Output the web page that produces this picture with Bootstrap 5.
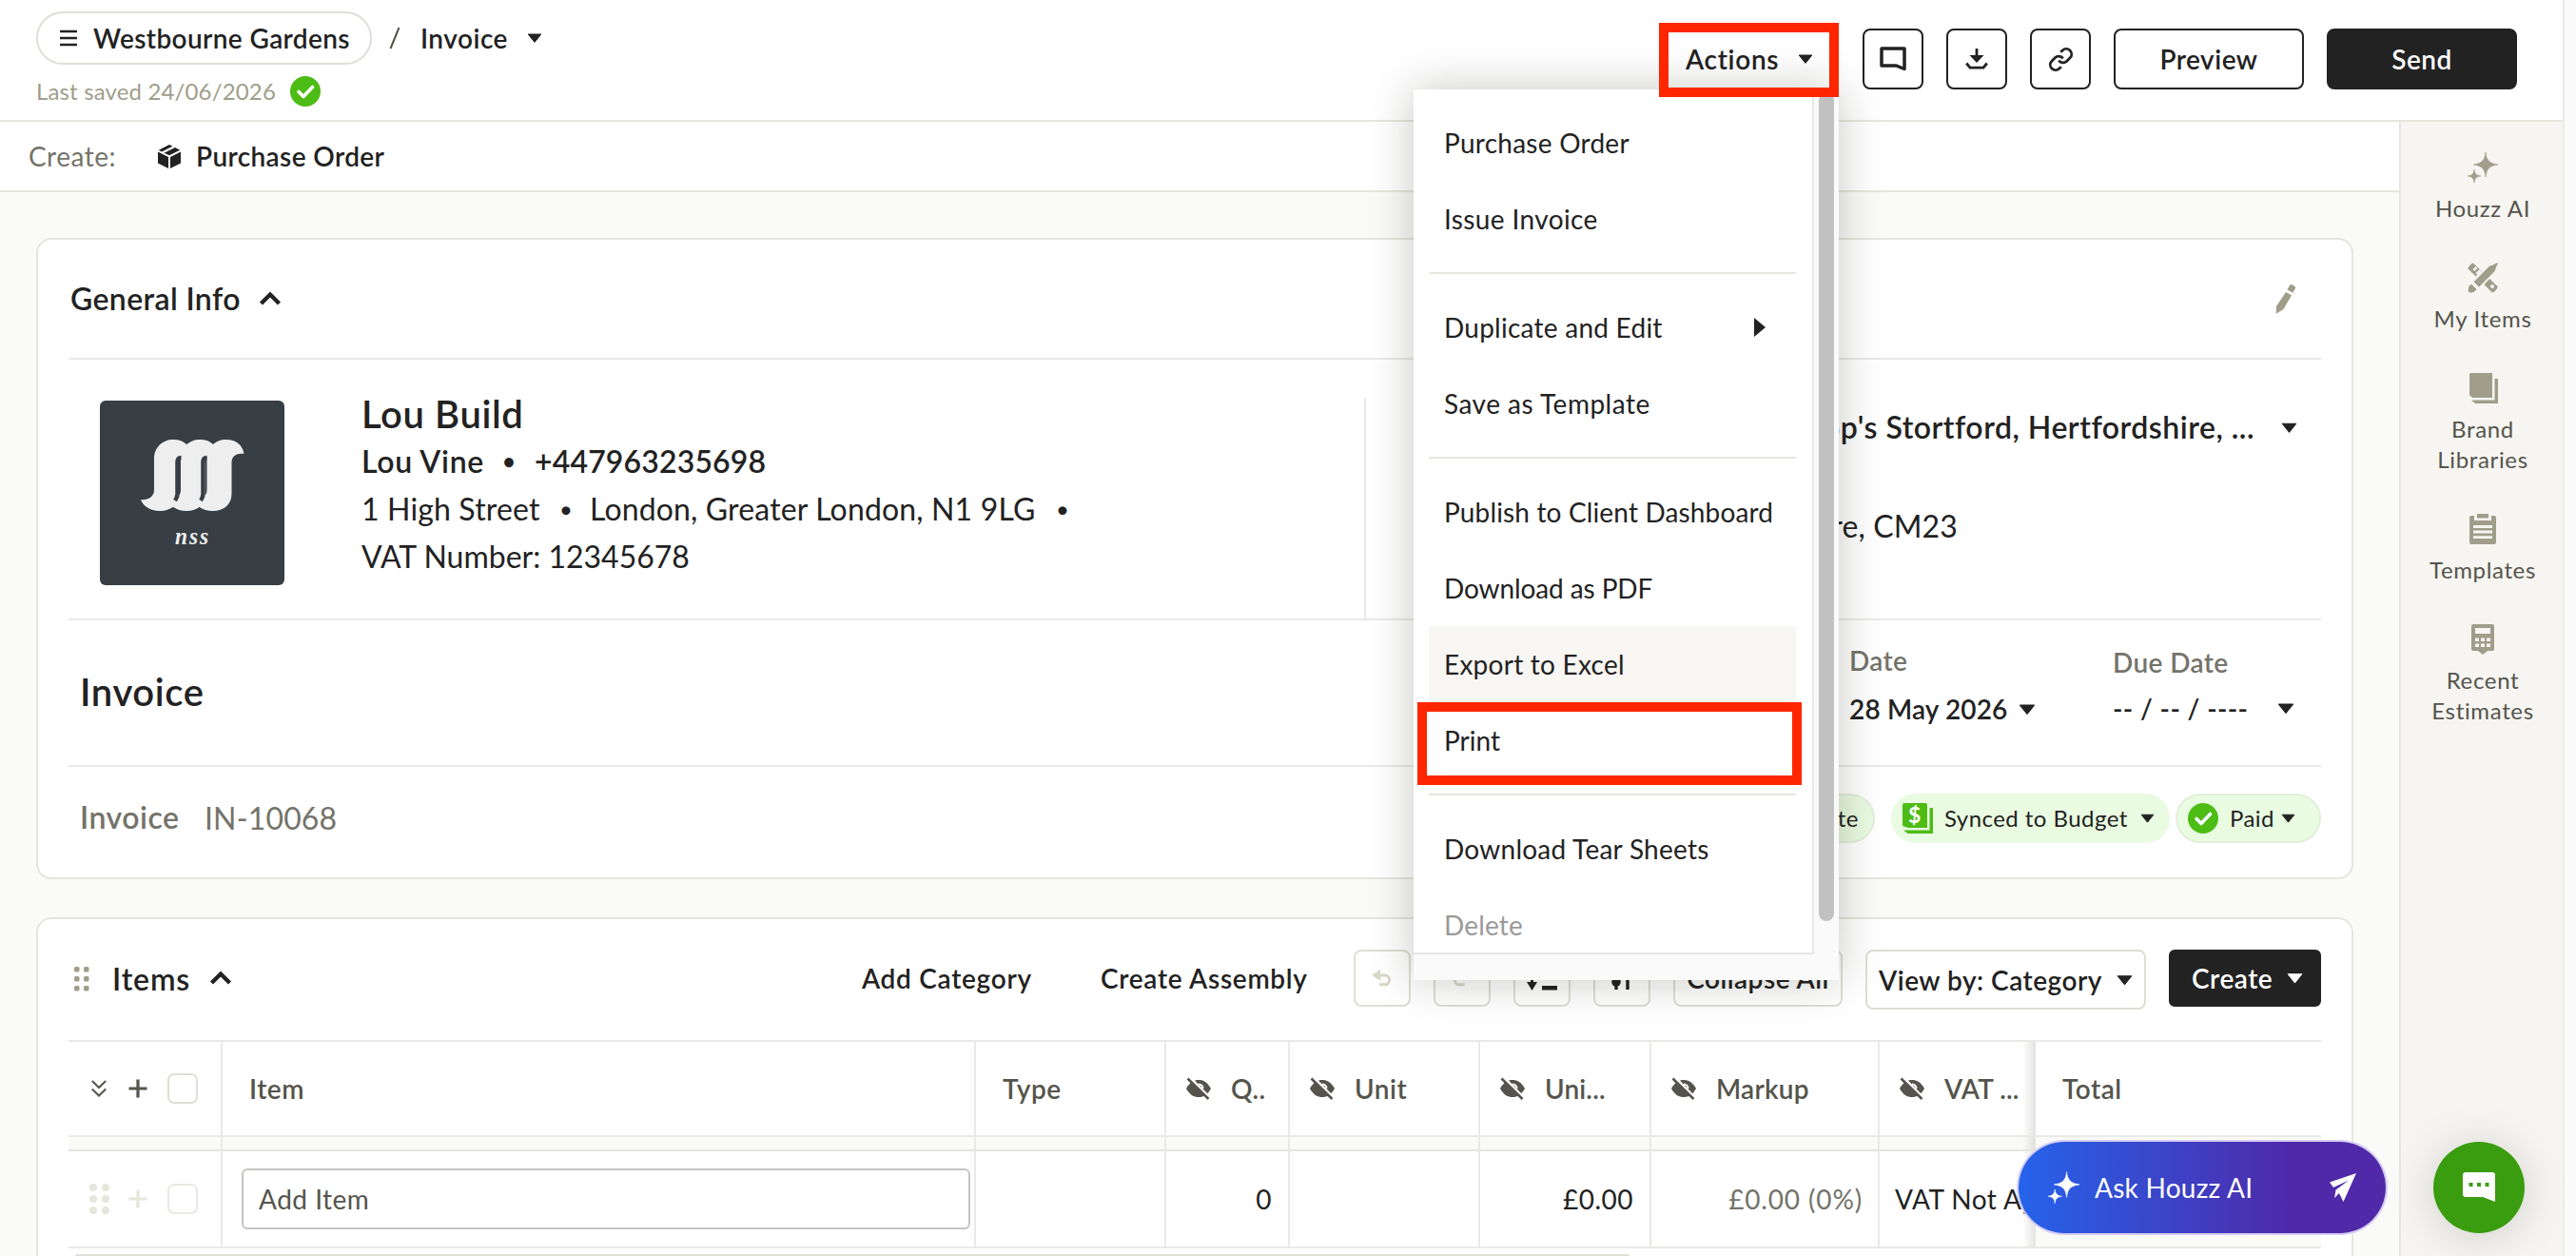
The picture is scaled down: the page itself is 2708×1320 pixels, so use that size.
<!DOCTYPE html>
<html lang="en">
<head>
<meta charset="utf-8">
<title>Invoice – Westbourne Gardens</title>
<link href="https://cdn.jsdelivr.net/npm/bootstrap@5.3.0/dist/css/bootstrap.min.css" rel="stylesheet">
<style>
:root{--ink:#222;--mid:#55544c;--soft:#74736a;--stone:#a09d8b;--line:#e6e6de;--line2:#e9e9e7;}
body{width:2708px;height:1320px;overflow:hidden;background:#fafafa;color:var(--ink);font-family:Lato,"Open Sans",sans-serif;font-size:28px;line-height:40px;letter-spacing:.5px;position:relative}
svg{display:block;flex:none}
span,.nw{white-space:nowrap}
.md{font-weight:600}
.ls-0{letter-spacing:0}.ls-1{letter-spacing:.15px}.ls-2{letter-spacing:.25px}.ls-3{letter-spacing:.38px}.ls-7{letter-spacing:.7px}.ls-9{letter-spacing:.85px}
.dot{font-size:24px}
.app-shell{width:2696px;height:1320px;border-right:2px solid #ebebe8;background:#fafaf8;overflow:hidden}
.top-bar{height:128px;flex:none;background:#fff;border-bottom:2px solid var(--line);padding:12px 48px 0 38px}
.project-pill{width:353px;height:56px;border:2px solid #deded8;border-radius:28px;padding-left:23px}
.saved-note{font-size:24px;line-height:32px;color:var(--stone);margin-top:12px}
.hd-btn{border:2px solid var(--ink);border-radius:8px;height:64px;width:64px;background:#fff}
.hd-wide{width:200px}
.hd-btn.hd-dark,.tool-btn.hd-dark{background:var(--ink);color:#fff}
.actions-trigger{width:161px;margin-right:1px}
.create-bar{height:74px;background:#fff;border-bottom:2px solid var(--line);padding-left:30px}
.side-rail{width:172px;background:#f6f5f1;border-left:2px solid var(--line);font-size:24px;line-height:32px;color:var(--mid);padding:32px 0 0 2px;gap:40px;text-align:center;letter-spacing:.65px}
.side-rail .lbl{margin-top:11px;margin-bottom:1px}
.panel{width:2436px;margin-left:38px;background:#fff;border:2px solid var(--line);border-radius:16px;padding:0 32px}
.row-title{height:126px;border-bottom:2px solid var(--line2);font-size:32px;padding-left:2px}
.row-company{height:274px;border-bottom:2px solid var(--line2);font-size:32px;line-height:50px}
.logo-box{width:194px;height:194px;border-radius:6px;background:#373e44;margin:43px 81px 0 33px}
.company-col{width:1362px}
.client-col{margin-top:40px;border-left:2px solid var(--line2);width:1006px;height:232px}
.row-heading{height:154px;border-bottom:2px solid var(--line2);padding-left:12px}
.row-number{height:116px;padding:0 0 8px 12px;color:var(--soft);font-size:32px}
.big-title{font-size:40px;letter-spacing:.6px}
.chip{height:52px;border-radius:26px;background:#e9fbe1;color:var(--ink);font-size:24px;line-height:32px;letter-spacing:.45px}
.chip-edge{border:2px solid #e3efdc}
.items-bar{height:127px;padding-top:32px}
.tool-btn{border:2px solid #deded4;border-radius:8px;height:60px;width:60px;background:#fff}
.grid-head,.grid-row,.grid-gap{display:flex}
.grid-head{height:102px;border-top:2px solid var(--line2);border-bottom:2px solid var(--line2);color:var(--mid)}
.grid-gap{height:15px;background:#fafaf8;border-bottom:2px solid var(--line)}
.grid-row{height:102px;border-bottom:2px solid var(--line2)}
.cell{border-right:2px solid var(--line2);display:flex;align-items:center;flex:none;overflow:hidden}
.c0{width:162px;padding-left:24px}.c1{width:792px}.c2{width:200px}.c3{width:130px}.c4{width:200px}.c5{width:180px}.c6{width:240px}
.c7{width:164px;border-right:0}.c8{width:300px;border-right:0}
.c7{background:linear-gradient(to right,transparent 150px,rgba(90,90,80,.17) 164px) no-repeat}
.grid-row .c8{background:#fafaf8}
.tick{width:32px;height:32px;border:2px solid #deded8;border-radius:7px;background:#fff}
.add-field{width:766px;height:64px;border:2px solid #c4c4c2;border-radius:6px;margin-left:20px;padding-left:16px;color:var(--mid)}
.h-track{height:10px;width:1634px;margin:6px 0 0 7px;background:#e0e0da;border-radius:2px}
.actions-menu{position:absolute;left:1486px;top:94px;width:447px;height:936px;background:#fafafa;box-shadow:0 0 44px rgba(20,20,0,.24);z-index:3}
.menu-inner{width:421px;height:909px;border-right:2px solid #e8e8e8;border-bottom:2px solid #e8e8e8;background:#fff;overflow:hidden;padding:16px 17px 0 16px}
.menu-row{height:80px;padding:0 16px;display:flex;align-items:center}
.menu-row.hov{background:#f7f6f3}
.menu-sep{height:2px;margin:16px 0;background:var(--line)}
.menu-thumb{position:absolute;left:426px;top:4px;width:16px;height:870px;border-radius:8px;background:#c1c1c1}
.mark-box{position:absolute;border:10px solid #ff2600;z-index:4}
.mark-actions{left:1744px;top:24px;width:189px;height:78px}
.mark-print{left:1490px;top:738px;width:404px;height:87px}
.ask-pill{position:absolute;left:2122px;top:1200px;width:386px;height:96px;border-radius:48px;background:linear-gradient(90deg,#2563eb,#4f29a8 75%);box-shadow:0 0 0 2px #d6ccf5;color:#fff;padding-left:31px;z-index:5}
.chat-fab{position:absolute;left:2558px;top:1200px;width:96px;height:96px;border-radius:50%;background:#3a9c0f;box-shadow:0 4px 48px rgba(0,0,0,.16);z-index:5}
</style>
<script src="https://cdn.jsdelivr.net/npm/bootstrap@5.3.0/dist/js/bootstrap.bundle.min.js"></script>
</head>
<body>
<svg width="0" height="0" class="position-absolute">
  <defs>
    <symbol id="caret" viewBox="0 0 16 10"><path d="M1.2 1h13.6L8 9.400z" fill="currentColor" stroke="currentColor" stroke-linejoin="round"/></symbol>
    <symbol id="up" viewBox="0 0 24 16"><path d="M2.500 13 12 3.500 21.500 13" fill="none" stroke="currentColor" stroke-width="4.400"/></symbol>
    <symbol id="okay" viewBox="0 0 32 32"><circle cx="16" cy="16" r="16" fill="#4dbc15"/><path d="M9 16.500 14 21.500 23.500 11.500" fill="none" stroke="#fff" stroke-width="3.600" stroke-linecap="round" stroke-linejoin="round"/></symbol>
    <symbol id="sparkle" viewBox="0 0 32 32"><path d="M19 0c.8 8 3.500 11.800 13 13-9.500 1.200-12.200 5-13 13-.8-8-3.500-11.800-13-13 9.500-1.200 12.200-5 13-13zM7 18c.4 4.200 2.200 6.500 7 7-4.800.5-6.600 2.800-7 7-.4-4.200-2.200-6.500-7-7 4.800-.5 6.600-2.800 7-7z" fill="currentColor" stroke="currentColor" stroke-width=".6"/></symbol>
    <symbol id="hidden-eye" viewBox="0 0 28 24"><path d="M1 12C5 5 9 3 14 3s9 2 13 9c-4 7-8 9-13 9S5 19 1 12z" fill="currentColor"/><path d="M14 7.500a4.500 4.500 0 0 1 4.500 4.500" fill="none" stroke="#fff" stroke-width="2"/><path d="M5.500 1 27 23" stroke="#fff" stroke-width="2.600"/><path d="M2.500 1.500 24.500 23" stroke="currentColor" stroke-width="2.600"/></symbol>
    <symbol id="plus" viewBox="0 0 20 20"><path d="M10 .5v19M.5 10h19" stroke="currentColor" stroke-width="3.200"/></symbol>
    <symbol id="return" viewBox="0 0 24 20"><path d="M0 6.500 10 0v13zM9 5.200h6a6.800 6.800 0 0 1 0 13.800H9v-3.200h6a3.700 3.700 0 0 0 0-7.400H9z" fill="currentColor"/></symbol>
  </defs>
</svg>

<div class="app-shell d-flex flex-column">
  <header class="top-bar d-flex justify-content-between">
    <div>
      <div class="d-flex align-items-center md">
        <div class="project-pill d-flex align-items-center">
          <svg width="18" height="18" viewBox="0 0 18 18"><path d="M0 2h18M0 9h18M0 16h18" stroke="#222" stroke-width="2.600"/></svg>
          <span class="ls-3" style="margin-left:17px">Westbourne Gardens</span>
        </div>
        <svg width="12" height="24" viewBox="0 0 12 24" style="margin-left:18px"><path d="M10.500 1 1.500 23" stroke="#55544c" stroke-width="2"/></svg>
        <span style="margin-left:21px;width:112px" class="d-inline-block">Invoice</span>
        <svg width="16" height="10"><use href="#caret"/></svg>
      </div>
      <div class="saved-note d-flex align-items-center"><span class="d-inline-block ls-1" style="width:267px">Last saved 24/06/2026</span><svg width="32" height="32"><use href="#okay"/></svg></div>
    </div>
    <div class="d-flex md" style="gap:24px;padding-top:18px">
      <div class="actions-trigger d-flex align-items-center" style="height:64px"><span class="d-inline-block ls-7" style="width:118px">Actions</span><svg width="16" height="10"><use href="#caret"/></svg></div>
      <div class="hd-btn d-flex align-items-center justify-content-center"><svg width="28" height="26" viewBox="0 0 28 26"><path d="M2 2h24v21.500L17.500 20H2z" fill="none" stroke="#222" stroke-width="3.500" stroke-linejoin="round"/></svg></div>
      <div class="hd-btn d-flex align-items-center justify-content-center"><svg width="24" height="24" viewBox="0 0 24 24"><path d="M12 1v8" stroke="#222" stroke-width="2.800"/><path d="M4.500 8h15L12 16z" fill="#222"/><path d="M1.200 16.500 5 21.200h14l3.800-4.700" fill="none" stroke="#222" stroke-width="2.800"/></svg></div>
      <div class="hd-btn d-flex align-items-center justify-content-center"><svg width="27" height="27" viewBox="0 0 24 24" fill="none" stroke="#222" stroke-width="2.500"><path d="M10 13a5 5 0 0 0 7.540.540l3-3a5 5 0 0 0-7.070-7.070l-1.720 1.710"/><path d="M14 11a5 5 0 0 0-7.540-.540l-3 3a5 5 0 0 0 7.070 7.070l1.710-1.710"/></svg></div>
      <div class="hd-btn hd-wide d-flex align-items-center justify-content-center">Preview</div>
      <div class="hd-btn hd-wide hd-dark d-flex align-items-center justify-content-center">Send</div>
    </div>
  </header>

  <div class="d-flex flex-grow-1" style="min-height:0">
    <main class="flex-grow-1">
      <div class="create-bar d-flex align-items-center">
        <span class="d-inline-block" style="width:136px;color:var(--soft)">Create:</span>
        <svg width="24" height="25" viewBox="0 0 24 25"><path d="M0 7.500 11 13v12L0 19.500zM24 7.500 13 13v12l11-5.500zM12 0l3.500 1.700L4 7.500.8 5.700zM18 3l5.200 2.700L12 11.300 6.500 8.700z" fill="#222"/></svg>
        <span class="md ls-3" style="margin-left:16px">Purchase Order</span>
      </div>

      <section class="panel" style="margin-top:48px;height:674px">
        <div class="row-title d-flex align-items-center md">
          <span class="d-inline-block ls-3" style="width:198px">General Info</span>
          <svg width="24" height="16"><use href="#up"/></svg>
          <svg class="ms-auto" width="22" height="32" viewBox="0 0 22 32" style="margin-right:26px"><path d="M15.500 1.200c.8-1.300 6.500 1.800 5.500 3.500l-2.600 5-6-3.200zM11 9l6 3.300L8.500 27 .8 31.800.9 24z" fill="#a09d8b"/></svg>
        </div>
        <div class="row-company d-flex ls-1">
          <div class="company-col d-flex">
            <div class="logo-box">
              <svg width="194" height="194" viewBox="0 0 194 194"><g fill="#eee"><path id="esse" d="M43 104c6 1 14-2 14-10V61c0-12 9-20 20-20 13 0 18 8 19 15-7-1-13 2-13 9v33c0 11-8 18-20 18-11 0-18-6-20-12z"/><use href="#esse" x="28"/><use href="#esse" x="55.500"/></g><g fill="none" stroke="#373e44" stroke-width="4.500"><path d="M85.500 60c-3 0-4 2-4 5v33c0 3-1 5-2.500 7"/><path d="M112.500 60c-3 0-4 2-4 5v33c0 3-1 5-2.500 7"/></g><text x="79" y="151" font-family="Liberation Serif,serif" font-style="italic" font-weight="700" font-size="25" letter-spacing="2" fill="#eee" textLength="37" lengthAdjust="spacingAndGlyphs">nss</text></svg>
            </div>
            <div style="margin-top:32px">
              <div class="big-title md ls-2">Lou Build</div>
              <div class="d-flex md"><span class="ls-7" style="width:148px">Lou Vine</span><span class="dot" style="width:34px">•</span><span>+447963235698</span></div>
              <div class="d-flex"><span style="width:208px">1 High Street</span><span class="dot" style="width:32px">•</span><span style="width:490px">London, Greater London, N1 9LG</span><span class="dot">•</span></div>
              <div class="ls-0"><span>VAT Number: 12345678</span></div>
            </div>
          </div>
          <div class="client-col">
            <div class="d-flex md justify-content-end align-items-center" style="padding:6px 25px 0 0;letter-spacing:.5px"><span style="margin-right:28px">Bishop's Stortford, Hertfordshire, ...</span><svg width="17" height="11"><use href="#caret"/></svg></div>
            <div class="nw text-end" style="margin-top:54px;padding-right:382px">Hertfordshire, CM23</div>
          </div>
        </div>
        <div class="row-heading d-flex">
          <div class="big-title md d-flex align-items-center" style="height:150px">Invoice</div>
          <div class="d-flex ms-auto md ls-3" style="padding-top:22px">
            <div style="width:277px"><div style="color:var(--soft)">Date</div><div class="d-flex align-items-center" style="margin-top:11px"><span class="ls-1" style="width:178px">28 May 2026</span><svg width="18" height="11"><use href="#caret"/></svg></div></div>
            <div style="width:219px;padding-top:2px"><div style="color:var(--soft)">Due Date</div><div class="d-flex align-items-center" style="margin-top:8px"><span style="width:173px">-- / -- / ----</span><svg width="18" height="11"><use href="#caret"/></svg></div></div>
          </div>
        </div>
        <div class="row-number d-flex align-items-center">
          <span class="md" style="width:131px;margin-top:-2px">Invoice</span><span class="ls-1">IN-10068</span>
          <div class="chip chip-edge ms-auto d-flex align-items-center justify-content-end" style="width:190px;padding-right:15px;margin-right:17px">Duplicate</div>
          <div class="chip d-flex align-items-center" style="width:293px;padding-left:12px;margin-right:6px">
            <svg width="32" height="32" viewBox="0 0 32 32"><path d="M2 0h22a2 2 0 0 1 2 2v24H6L0 24V2a2 2 0 0 1 2-2zM28.500 5H32v27H5.500L1 28.500h27.500z" fill="#4dbc15"/><text x="13" y="21" text-anchor="middle" font-family="Lato,sans-serif" font-weight="700" font-size="23" fill="#fff">$</text></svg>
            <span style="margin-left:12px;width:206px">Synced to Budget</span><svg width="15" height="10"><use href="#caret"/></svg>
          </div>
          <div class="chip chip-edge d-flex align-items-center" style="width:153px;padding-left:11px"><svg width="32" height="32"><use href="#okay"/></svg><span style="margin-left:12px;width:54px">Paid</span><svg width="15" height="10"><use href="#caret"/></svg></div>
        </div>
      </section>

      <section class="panel" style="margin-top:40px;height:400px">
        <div class="items-bar d-flex md">
          <div class="d-flex align-items-center" style="height:60px;font-size:32px">
            <svg width="16" height="26" viewBox="0 0 16 26" style="margin:2px 24px 0 6px" fill="#a09d8b"><rect width="5.500" height="5.500" rx="1.500"/><rect x="10" width="5.500" height="5.500" rx="1.500"/><rect y="10" width="5.500" height="5.500" rx="1.500"/><rect x="10" y="10" width="5.500" height="5.500" rx="1.500"/><rect y="20" width="5.500" height="5.500" rx="1.500"/><rect x="10" y="20" width="5.500" height="5.500" rx="1.500"/></svg>
            <span class="ls-9" style="width:102px;margin-top:2px">Items</span><svg width="24" height="16"><use href="#up"/></svg>
          </div>
          <div class="d-flex ms-auto" style="height:60px;gap:24px">
            <span class="d-flex align-items-center ls-7" style="width:227px">Add Category</span>
            <span class="d-flex align-items-center ls-7" style="width:242px">Create Assembly</span>
            <div class="tool-btn d-flex align-items-center justify-content-center"><svg width="22" height="20" style="color:#d8d8c8"><use href="#return"/></svg></div>
            <div class="tool-btn d-flex align-items-center justify-content-center"><svg width="22" height="20" style="color:#d8d8c8;transform:scaleX(-1)"><use href="#return"/></svg></div>
            <div class="tool-btn d-flex align-items-center justify-content-center"><svg width="32" height="28" viewBox="0 0 32 28"><path d="M5.500 2v18" stroke="#222" stroke-width="3"/><path d="M0 18h11l-5.500 9zM16 22h16v4.500H16z" fill="#222"/></svg></div>
            <div class="tool-btn d-flex align-items-center justify-content-center"><svg width="22" height="24" viewBox="0 0 22 24"><path d="M5 0v24M17 0v24" stroke="#222" stroke-width="3.400"/><circle cx="5" cy="16" r="4.800" fill="#222"/></svg></div>
            <div class="tool-btn d-flex align-items-center justify-content-center nw" style="width:178px">Collapse All</div>
            <div class="tool-btn d-flex align-items-center" style="width:295px;height:63px;padding-left:12px"><span style="width:250px">View by: Category</span><svg width="17" height="12"><use href="#caret"/></svg></div>
            <div class="tool-btn hd-dark d-flex align-items-center" style="width:160px;padding-left:22px;border-color:#222;border-radius:6px"><span style="width:100px">Create</span><svg width="17" height="12"><use href="#caret"/></svg></div>
          </div>
        </div>

        <div class="grid-head md">
          <div class="cell c0">
            <svg width="16" height="18" viewBox="0 0 16 18" fill="none" stroke="#55544c" stroke-width="2"><path d="m.8 1 7.200 7 7.200-7M.8 9.500l7.200 7 7.200-7"/></svg>
            <svg width="20" height="20" style="margin:0 21px 0 23px"><use href="#plus"/></svg><div class="tick"></div>
          </div>
          <div class="cell c1" style="padding-left:28px">Item</div>
          <div class="cell c2" style="padding-left:28px">Type</div>
          <div class="cell c3" style="padding-left:20px"><svg width="28" height="24" style="margin-right:20px"><use href="#hidden-eye"/></svg><span>Q..</span></div>
          <div class="cell c4" style="padding-left:20px"><svg width="28" height="24" style="margin-right:20px"><use href="#hidden-eye"/></svg><span>Unit</span></div>
          <div class="cell c5" style="padding-left:20px"><svg width="28" height="24" style="margin-right:20px"><use href="#hidden-eye"/></svg><span class="ls-1">Uni...</span></div>
          <div class="cell c6" style="padding-left:20px"><svg width="28" height="24" style="margin-right:20px"><use href="#hidden-eye"/></svg><span class="ls-2">Markup</span></div>
          <div class="cell c7" style="padding-left:20px"><svg width="28" height="24" style="margin-right:20px"><use href="#hidden-eye"/></svg><span class="ls-1">VAT ...</span></div>
          <div class="cell c8" style="padding-left:28px">Total</div>
        </div>
        <div class="grid-gap"><div class="cell c0"></div><div class="cell c1"></div><div class="cell c2"></div><div class="cell c3"></div><div class="cell c4"></div><div class="cell c5"></div><div class="cell c6"></div><div class="cell c7"></div></div>
        <div class="grid-row">
          <div class="cell c0" style="color:#e6e6dc;padding-left:22px">
            <svg width="22" height="32" viewBox="0 0 22 32" fill="currentColor"><circle cx="4" cy="4" r="4"/><circle cx="17" cy="4" r="4"/><circle cx="4" cy="16" r="4"/><circle cx="17" cy="16" r="4"/><circle cx="4" cy="28" r="4"/><circle cx="17" cy="28" r="4"/></svg>
            <svg width="20" height="20" style="margin:0 21px 0 19px"><use href="#plus"/></svg><div class="tick" style="border-color:#e9e9e4"></div>
          </div>
          <div class="cell c1"><div class="add-field d-flex align-items-center">Add Item</div></div>
          <div class="cell c2"></div>
          <div class="cell c3 justify-content-end" style="padding-right:17px">0</div>
          <div class="cell c4"></div>
          <div class="cell c5 justify-content-end" style="padding-right:17px">£0.00</div>
          <div class="cell c6 justify-content-end ls-9" style="padding-right:16px;color:var(--soft)">£0.00 (0%)</div>
          <div class="cell c7 nw" style="padding-left:16px">VAT Not Applied</div>
          <div class="cell c8"></div>
        </div>
        <div class="h-track"></div>
      </section>
    </main>

    <aside class="side-rail d-flex flex-column align-items-center">
      <div class="d-flex flex-column align-items-center"><svg width="32" height="32" style="color:#a09d8b"><use href="#sparkle"/></svg><div class="lbl">Houzz AI</div></div>
      <div class="d-flex flex-column align-items-center"><svg width="32" height="32" viewBox="0 0 32 32"><g fill="#a09d8b"><path d="M6 .5 31.500 25c1 1.500-4 7-5.500 6.500L.5 6.500C0 5 4.500 0 6 .5z"/><path d="M32 0 29 9 12 27 5 20 22 3z" stroke="#f6f5f1" stroke-width="2.500"/><path d="M32 0 28.500 9 12 25.500 7 20.500 23 4z"/><path d="m4 22 6 6c-2.500 4-6 4.500-9 3.500-1.500-3-1-6.500 3-9.500z" stroke="#f6f5f1"/></g><circle cx="26" cy="25" r="2" fill="#f6f5f1"/><path d="m6.500 8 3-3M9.500 12l4-4" stroke="#f6f5f1" stroke-width="2.500"/></svg><div class="lbl">My Items</div></div>
      <div class="d-flex flex-column align-items-center"><svg width="32" height="32" viewBox="0 0 32 32"><path d="M3.500 0H26v26H5L2 23V2c0-1 .5-2 1.500-2zM28.500 6H32v26H8l-4-3.500h24.500z" fill="#a09d8b"/></svg><div class="lbl">Brand<br>Libraries</div></div>
      <div class="d-flex flex-column align-items-center"><svg width="28" height="32" viewBox="0 0 28 32"><path d="M2 2h3v5h18V2h3a2 2 0 0 1 2 2v26a2 2 0 0 1-2 2H2a2 2 0 0 1-2-2V4a2 2 0 0 1 2-2zM8 0h12v4.500H8z" fill="#a09d8b"/><path d="M4 13.500h20M4 19h20M4 24.700h20" stroke="#f6f5f1" stroke-width="2.800"/></svg><div class="lbl">Templates</div></div>
      <div class="d-flex flex-column align-items-center"><svg width="24" height="32" viewBox="0 0 24 32"><path d="M2 0h20a2 2 0 0 1 2 2v24.500a2 2 0 0 1-2 1.500h-5l-5 4-5-4H2a2 2 0 0 1-2-1.500V2a2 2 0 0 1 2-2z" fill="#a09d8b"/><path d="M4 4h16v6H4zM4 14.500h4V18H4zM10 14.500h4V18h-4zM16 14.500h4V18h-4zM4 20.500h4V24H4zM10 20.500h4V24h-4zM16 20.500h4V24h-4z" fill="#f6f5f1"/></svg><div class="lbl">Recent<br>Estimates</div></div>
    </aside>
  </div>
</div>

<div class="actions-menu">
  <div class="menu-inner">
    <div class="menu-row ls-2">Purchase Order</div>
    <div class="menu-row ls-3">Issue Invoice</div>
    <div class="menu-sep"></div>
    <div class="menu-row ls-2">Duplicate and Edit<svg class="ms-auto" width="12" height="20" viewBox="0 0 12 20" style="margin-right:16px"><path d="M0 0v20l12-10z" fill="#222"/></svg></div>
    <div class="menu-row">Save as Template</div>
    <div class="menu-sep"></div>
    <div class="menu-row nw ls-1">Publish to Client Dashboard</div>
    <div class="menu-row ls-0" style="letter-spacing:-.1px">Download as PDF</div>
    <div class="menu-row hov ls-2">Export to Excel</div>
    <div class="menu-row ls-0">Print</div>
    <div class="menu-sep"></div>
    <div class="menu-row ls-2">Download Tear Sheets</div>
    <div class="menu-row ls-1" style="color:#9a9a9a">Delete</div>
  </div>
  <div class="menu-thumb"></div>
</div>
<div class="mark-box mark-actions"></div>
<div class="mark-box mark-print"></div>

<div class="ask-pill d-flex align-items-center">
  <svg width="33" height="34"><use href="#sparkle"/></svg><span class="ls-2" style="margin-left:16px;width:247px">Ask Houzz AI</span>
  <svg width="28" height="30" viewBox="0 0 28 30"><path d="M28 0 0 9.500l4 5.500L20 7.500 6.500 17.500 5 26l5-5 4.500 9z" fill="#fff"/></svg>
</div>
<div class="chat-fab d-flex align-items-center justify-content-center"><svg width="34" height="32" viewBox="0 0 34 32"><path d="M3 0h28a3 3 0 0 1 3 3v28l-13-5H3a3 3 0 0 1-3-3V3a3 3 0 0 1 3-3z" fill="#fff"/><path d="M6.500 11h4v4h-4zM15 11h4v4h-4zM23.500 11h4v4h-4z" fill="#3a9c0f"/></svg></div>
</body>
</html>
